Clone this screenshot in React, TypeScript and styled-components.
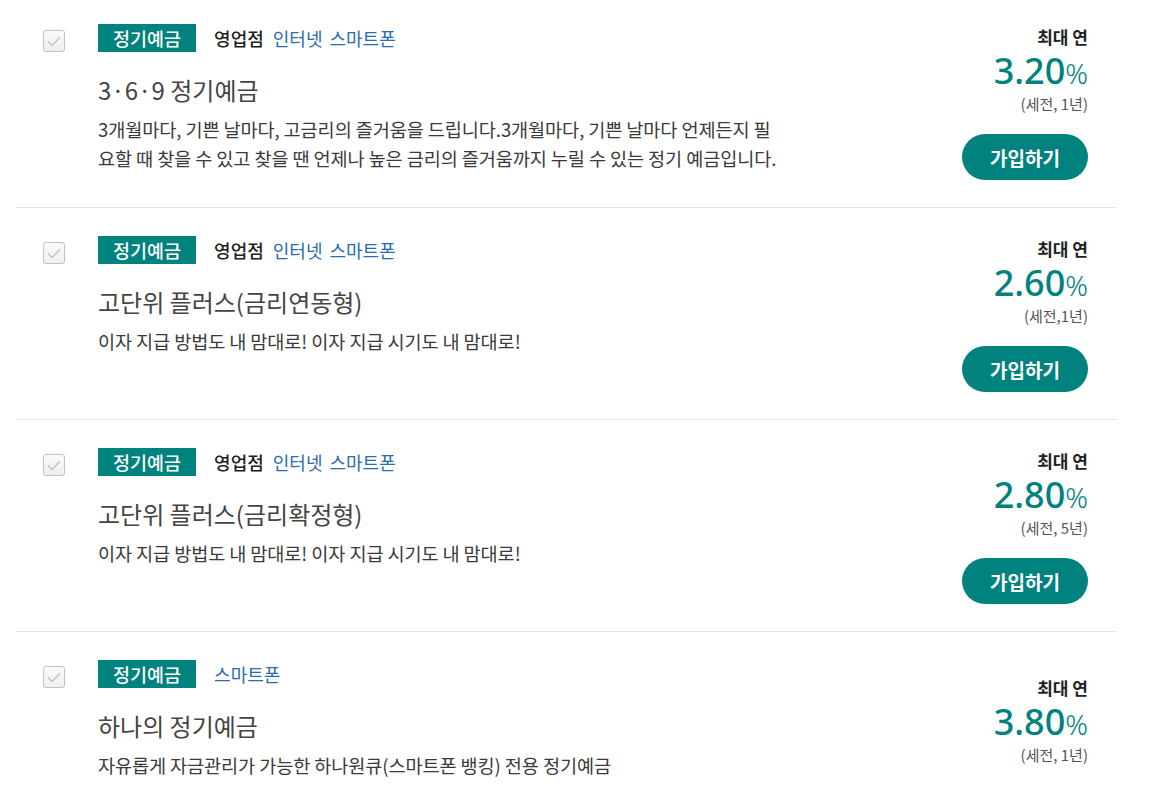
import React from 'react'
import styled, { createGlobalStyle } from 'styled-components'

interface Product {
  name: string
  desc: string
  branch?: boolean
  channels: string[]
  rate: string
  term: string
  join?: boolean
}

const products: Product[] = [
  {
    name: '3·6·9 정기예금',
    desc: '3개월마다, 기쁜 날마다, 고금리의 즐거움을 드립니다.3개월마다, 기쁜 날마다 언제든지 필요할 때 찾을 수 있고 찾을 땐 언제나 높은 금리의 즐거움까지 누릴 수 있는 정기 예금입니다.',
    branch: true,
    channels: ['인터넷', '스마트폰'],
    rate: '3.20',
    term: '(세전, 1년)',
    join: true,
  },
  {
    name: '고단위 플러스(금리연동형)',
    desc: '이자 지급 방법도 내 맘대로! 이자 지급 시기도 내 맘대로!',
    branch: true,
    channels: ['인터넷', '스마트폰'],
    rate: '2.60',
    term: '(세전,1년)',
    join: true,
  },
  {
    name: '고단위 플러스(금리확정형)',
    desc: '이자 지급 방법도 내 맘대로! 이자 지급 시기도 내 맘대로!',
    branch: true,
    channels: ['인터넷', '스마트폰'],
    rate: '2.80',
    term: '(세전, 5년)',
    join: true,
  },
  {
    name: '하나의 정기예금',
    desc: '자유롭게 자금관리가 가능한 하나원큐(스마트폰 뱅킹) 전용 정기예금',
    channels: ['스마트폰'],
    rate: '3.80',
    term: '(세전, 1년)',
  },
]

const GlobalStyle = createGlobalStyle`
  body {
    margin: 0;
    background: #fff;
    font-family: "Noto Sans CJK KR", "Noto Sans", sans-serif;
    overflow: hidden;
  }
`

const List = styled.ul`
  list-style: none;
  margin: 0 0 0 16px;
  padding: 0;
  width: 1100px;
`

const Row = styled.li`
  display: flex;
  align-items: center;
  padding: 28px 28px 27px 27px;
  border-top: 1px solid #e3e3e3;

  &:first-child {
    margin-top: -4px;
    border-top: none;
  }
`

const Left = styled.div`
  display: flex;
  align-self: flex-start;
  gap: 33px;
  flex: 1;
`

const Check = styled.span`
  display: flex;
  align-items: center;
  justify-content: center;
  width: 22px;
  height: 22px;
  margin-top: 6px;
  box-sizing: border-box;
  border: 1px solid #c2c2c2;
  border-radius: 3px;
  background: linear-gradient(#fbfbfb, #eeeeee);
`

const Info = styled.div`
  width: 682px;
`

const Meta = styled.div`
  display: flex;
  align-items: center;
  gap: 7px;
  height: 28px;
`

const Tag = styled.span`
  display: inline-flex;
  align-items: center;
  height: 28px;
  padding: 0 15px;
  margin-right: 11px;
  background: #00827e;
  color: #fff;
  font-size: 18.5px;
  font-weight: 500;
`

const Channel = styled.span<{ $branch?: boolean }>`
  font-size: 18px;
  color: ${(p) => (p.$branch ? '#222' : '#2a6cae')};
  font-weight: ${(p) => (p.$branch ? 500 : 400)};
  margin-right: ${(p) => (p.$branch ? '2px' : '0')};
`

const Title = styled.h3`
  margin: 22px 0 0;
  font-size: 24px;
  line-height: 32px;
  font-weight: 400;
  color: #444;
`

const Desc = styled.p`
  margin: 8px 0 0;
  font-size: 18.6px;
  line-height: 29px;
  color: #3a3a3a;
  letter-spacing: -0.1px;
  word-break: break-all;
`

const Right = styled.div`
  display: flex;
  flex-direction: column;
  align-items: flex-end;
  width: 140px;
`

const Label = styled.div`
  font-size: 17px;
  line-height: 26px;
  font-weight: 700;
  color: #222;
`

const Rate = styled.div`
  margin-top: 1px;
  height: 40px;
  line-height: 40px;
  color: #00827e;
  font-family: "Noto Sans", sans-serif;
  white-space: nowrap;
`

const Num = styled.span`
  font-size: 36px;
  font-weight: 500;
`

const Pct = styled.span`
  font-size: 28px;
  font-weight: 300;
`

const Term = styled.div`
  margin-top: 3px;
  font-size: 15px;
  line-height: 20px;
  color: #555;
`

const JoinButton = styled.button`
  margin-top: 20px;
  width: 126px;
  height: 46px;
  border: none;
  border-radius: 23px;
  background: #00827e;
  color: #fff;
  font-family: inherit;
  font-size: 19px;
  font-weight: 700;
  cursor: pointer;
`

const CheckIcon = () => (
  <svg width="16" height="13" viewBox="0 0 16 13">
    <path d="M2 6.6 L6 10.4 L14 2.4" fill="none" stroke="#c6c6c6" strokeWidth="1.5" />
  </svg>
)

const App = () => (
  <>
    <GlobalStyle />
    <List>
      {products.map((p) => (
        <Row key={p.name}>
          <Left>
            <Check>
              <CheckIcon />
            </Check>
            <Info>
              <Meta>
                <Tag>정기예금</Tag>
                {p.branch ? <Channel $branch>영업점</Channel> : null}
                {p.channels.map((c) => (
                  <Channel key={c}>{c}</Channel>
                ))}
              </Meta>
              <Title>{p.name}</Title>
              <Desc>{p.desc}</Desc>
            </Info>
          </Left>
          <Right>
            <Label>최대 연</Label>
            <Rate>
              <Num>{p.rate}</Num>
              <Pct>%</Pct>
            </Rate>
            <Term>{p.term}</Term>
            {p.join ? <JoinButton>가입하기</JoinButton> : null}
          </Right>
        </Row>
      ))}
    </List>
  </>
)

export default App
